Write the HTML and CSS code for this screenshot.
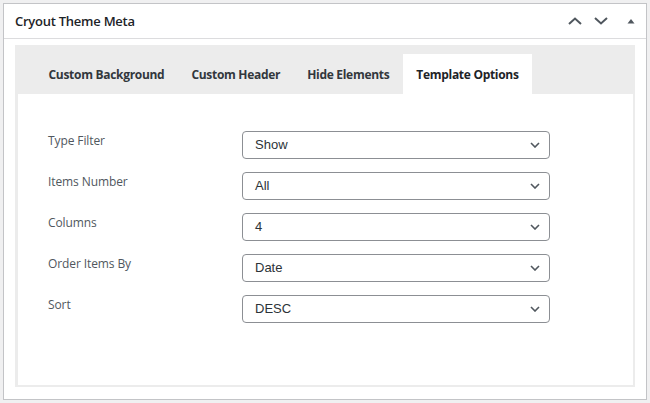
FILE: index.html
```html
<!DOCTYPE html>
<html>
<head>
<meta charset="utf-8">
<link rel="stylesheet" href="styles.css">
</head>
<body>
<div class="postbox">
  <div class="postbox-header">
    <h2 class="postbox-title">Cryout Theme Meta</h2>
    <div class="handle-actions">
      <svg class="act act-up" width="16" height="10" viewBox="0 0 16 10"><path d="M2 8 L8 2.5 L14 8" fill="none" stroke="#50575e" stroke-width="2"/></svg>
      <svg class="act act-down" width="16" height="10" viewBox="0 0 16 10"><path d="M2 2 L8 7.5 L14 2" fill="none" stroke="#50575e" stroke-width="2"/></svg>
      <svg class="act act-toggle" width="10" height="10" viewBox="0 0 10 10"><path d="M1.5 7.5 L5 3 L8.5 7.5 Z" fill="#50575e"/></svg>
    </div>
  </div>
  <div class="postbox-inside">
    <div class="tabs-panel">
      <div class="tab-bar">
        <div class="tab">Custom Background</div>
        <div class="tab">Custom Header</div>
        <div class="tab">Hide Elements</div>
        <div class="tab tab-active">Template Options</div>
      </div>
      <div class="tab-content">
        <div class="form-grid">
          <label class="field-label">Type Filter</label>
          <div class="select">Show</div>
          <label class="field-label">Items Number</label>
          <div class="select">All</div>
          <label class="field-label">Columns</label>
          <div class="select">4</div>
          <label class="field-label">Order Items By</label>
          <div class="select">Date</div>
          <label class="field-label">Sort</label>
          <div class="select">DESC</div>
        </div>
      </div>
    </div>
  </div>
</div>
</body>
</html>
```

FILE: styles.css
```css
html, body {
  margin: 0;
  padding: 0;
  background: #f0f0f1;
}
body {
  padding: 3px;
  font-family: "Open Sans", "Noto Sans", sans-serif;
  color: #1d2327;
}
.postbox {
  width: 644px;
  height: 397px;
  box-sizing: border-box;
  border: 1px solid #c3c4c7;
  background: #fff;
  display: flex;
  flex-direction: column;
}
.postbox-header {
  height: 34px;
  border-bottom: 1px solid #dcdcde;
  display: flex;
  align-items: center;
  justify-content: space-between;
  padding: 0 10px 0 11px;
  flex: none;
}
.postbox-title {
  margin: 0;
  font-size: 13px;
  font-weight: 600;
  color: #1d2327;
  letter-spacing: -0.25px;
}
.handle-actions {
  display: flex;
  align-items: center;
}
.act { display: block; }
.act-up { margin-right: 10px; }
.act-down { margin-right: 17px; }
.postbox-inside {
  flex: 1;
  padding: 6px 11px 12px 11px;
  display: flex;
}
.tabs-panel {
  flex: 1;
  background: #ececec;
  padding: 0 2px 2px 3px;
  display: flex;
  flex-direction: column;
}
.tab-bar {
  display: flex;
  padding: 9px 0 0 17px;
  flex: none;
}
.tab {
  height: 40px;
  line-height: 41px;
  padding: 0 13.5px;
  font-size: 12px;
  font-weight: 700;
  color: #32373c;
  letter-spacing: -0.3px;
}
.tab-active {
  background: #fff;
  color: #1d2327;
}
.tab-content {
  flex: 1;
  background: #fff;
  padding: 37px 0 0 30px;
}
.form-grid {
  display: grid;
  grid-template-columns: 194px 308px;
  grid-auto-rows: 28px;
  row-gap: 13px;
}
.field-label {
  font-size: 12px;
  line-height: 20px;
  color: #50575e;
  letter-spacing: -0.1px;
}
.select {
  box-sizing: border-box;
  height: 28px;
  border: 1px solid #8c8f94;
  border-radius: 4px;
  padding: 0 24px 0 12px;
  font-family: "Liberation Sans", Arial, sans-serif;
  font-size: 13px;
  line-height: 26px;
  color: #2c3338;
  background: #fff url("data:image/svg+xml;utf8,<svg xmlns='http://www.w3.org/2000/svg' width='10' height='6' viewBox='0 0 10 6'><path d='M1 1 L5 5 L9 1' fill='none' stroke='%2350575e' stroke-width='1.6'/></svg>") no-repeat right 9px center;
}
```
